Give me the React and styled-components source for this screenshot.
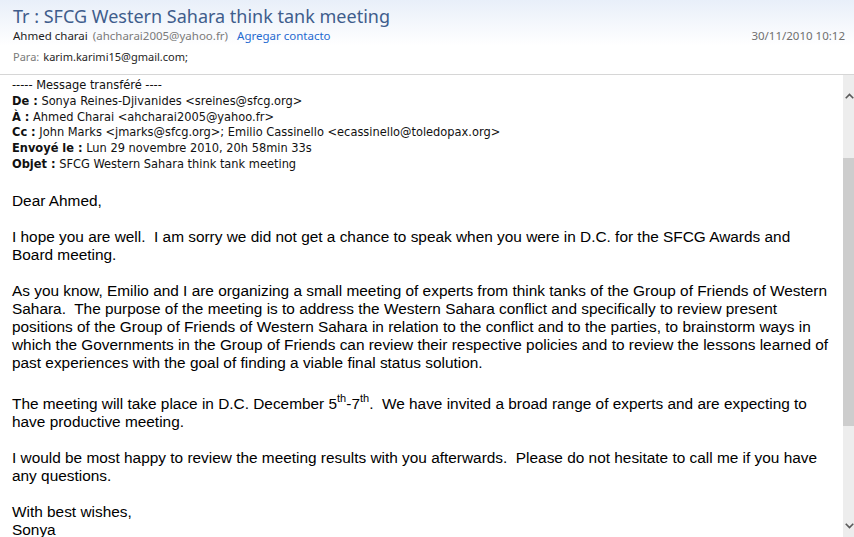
import React from "react";
import styled, { createGlobalStyle } from "styled-components";

const Global = createGlobalStyle`
  html, body { margin: 0; padding: 0; background: #fff; }
  body { width: 854px; height: 537px; overflow: hidden; }
`;

const Page = styled.div`
  width: 854px;
  height: 537px;
  display: flex;
  flex-direction: column;
  overflow: hidden;
  background: #fff;
`;

const Header = styled.header`
  background: linear-gradient(to bottom, #e8eff9 0px, #ffffff 46px);
  padding: 4px 9px 0 13px;
  height: 70px;
  border-bottom: 1px solid #d6d6d6;
  box-sizing: content-box;
  font-family: "Noto Sans", "Open Sans", sans-serif;
`;

const Title = styled.h1`
  margin: 0;
  font-weight: 400;
  font-size: 18px;
  line-height: 24px;
  color: #3f5d8c;
  white-space: nowrap;
`;

const MetaRow = styled.div`
  display: flex;
  align-items: baseline;
  gap: ${(p) => p.$gap || 8}px;
  font-size: ${(p) => p.$size || 12}px;
  line-height: 16px;
  margin-top: ${(p) => p.$top || 0}px;
  white-space: nowrap;
`;

const Name = styled.span`
  color: #1e1e1e;
`;

const Muted = styled.span`
  color: #7a7a7a;
`;

const Link = styled.span`
  color: #1f6ad0;
  margin-left: 4px;
`;

const DateText = styled.span`
  margin-left: auto;
  color: #6f6f6f;
`;

const Content = styled.div`
  flex: 1;
  display: flex;
  min-height: 0;
`;

const Message = styled.div`
  flex: 1;
  padding: 2px 0 0 12px;
  overflow: hidden;
`;

const Forward = styled.div`
  font-family: "DejaVu Sans Condensed", "DejaVu Sans", sans-serif;
  font-size: 12.7px;
  line-height: 15.8px;
  color: #111;
  white-space: nowrap;
`;

const Label = styled.b`
  font-weight: 700;
`;

const Body = styled.div`
  margin-top: 20px;
  font-family: "Liberation Sans", Arial, sans-serif;
  font-size: 15.4px;
  line-height: 18px;
  color: #000;
`;

const Para = styled.p`
  margin: 0 0 18px 0;
  padding-top: ${(p) => p.$top || 0}px;
  white-space: pre;
`;

const Sup = styled.sup`
  font-size: 11px;
  line-height: 0;
  vertical-align: 7px;
`;

const Scrollbar = styled.div`
  width: 11px;
  background: #ededed;
  display: flex;
  flex-direction: column;
`;

const Arrow = styled.div`
  height: ${(p) => p.$h}px;
  display: flex;
  align-items: center;
  padding-left: 2px;
`;

const Track = styled.div`
  flex: 1;
  display: flex;
  flex-direction: column;
`;

const Thumb = styled.div`
  margin-top: ${(p) => p.$top}px;
  height: ${(p) => p.$h}px;
  background: #cdcdcd;
`;

export default function App() {
  return (
    <Page>
      <Global />
      <Header>
        <Title>Tr : SFCG Western Sahara think tank meeting</Title>
        <MetaRow $size={11.5} $gap={5}>
          <Name>Ahmed charai</Name>
          <Muted>(ahcharai2005@yahoo.fr)</Muted>
          <Link>Agregar contacto</Link>
          <DateText>30/11/2010 10:12</DateText>
        </MetaRow>
        <MetaRow $size={11} $gap={4} $top={5}>
          <Muted>Para:</Muted>
          <Name>karim.karimi15@gmail.com;</Name>
        </MetaRow>
      </Header>
      <Content>
        <Message>
          <Forward>
            <div>----- Message transféré ----</div>
            <div>
              <Label>De :</Label> Sonya Reines-Djivanides &lt;sreines@sfcg.org&gt;
            </div>
            <div>
              <Label>À :</Label> Ahmed Charai &lt;ahcharai2005@yahoo.fr&gt;
            </div>
            <div>
              <Label>Cc :</Label> John Marks &lt;jmarks@sfcg.org&gt;; Emilio Cassinello &lt;ecassinello@toledopax.org&gt;
            </div>
            <div>
              <Label>Envoyé le :</Label> Lun 29 novembre 2010, 20h 58min 33s
            </div>
            <div>
              <Label>Objet :</Label> SFCG Western Sahara think tank meeting
            </div>
          </Forward>
          <Body>
            <Para>Dear Ahmed,</Para>
            <Para>
              {"I hope you are well.  I am sorry we did not get a chance to speak when you were in D.C. for the SFCG Awards and\nBoard meeting."}
            </Para>
            <Para>
              {"As you know, Emilio and I are organizing a small meeting of experts from think tanks of the Group of Friends of Western\nSahara.  The purpose of the meeting is to address the Western Sahara conflict and specifically to review present\npositions of the Group of Friends of Western Sahara in relation to the conflict and to the parties, to brainstorm ways in\nwhich the Governments in the Group of Friends can review their respective policies and to review the lessons learned of\npast experiences with the goal of finding a viable final status solution."}
            </Para>
            <Para $top={5}>
              {"The meeting will take place in D.C. December 5"}
              <Sup>th</Sup>-7<Sup>th</Sup>
              {".  We have invited a broad range of experts and are expecting to\nhave productive meeting."}
            </Para>
            <Para>
              {"I would be most happy to review the meeting results with you afterwards.  Please do not hesitate to call me if you have\nany questions."}
            </Para>
            <Para>{"With best wishes,\nSonya"}</Para>
          </Body>
        </Message>
        <Scrollbar>
          <Arrow $h={42}>
            <svg width="12" height="8" viewBox="0 0 12 8">
              <path d="M1 7 L6 2 L11 7" fill="none" stroke="#5a5a5a" strokeWidth="2.2" />
            </svg>
          </Arrow>
          <Track>
            <Thumb $top={41} $h={268} />
          </Track>
          <Arrow $h={22}>
            <svg width="12" height="8" viewBox="0 0 12 8">
              <path d="M1 1 L6 6 L11 1" fill="none" stroke="#5a5a5a" strokeWidth="2.2" />
            </svg>
          </Arrow>
        </Scrollbar>
      </Content>
    </Page>
  );
}
